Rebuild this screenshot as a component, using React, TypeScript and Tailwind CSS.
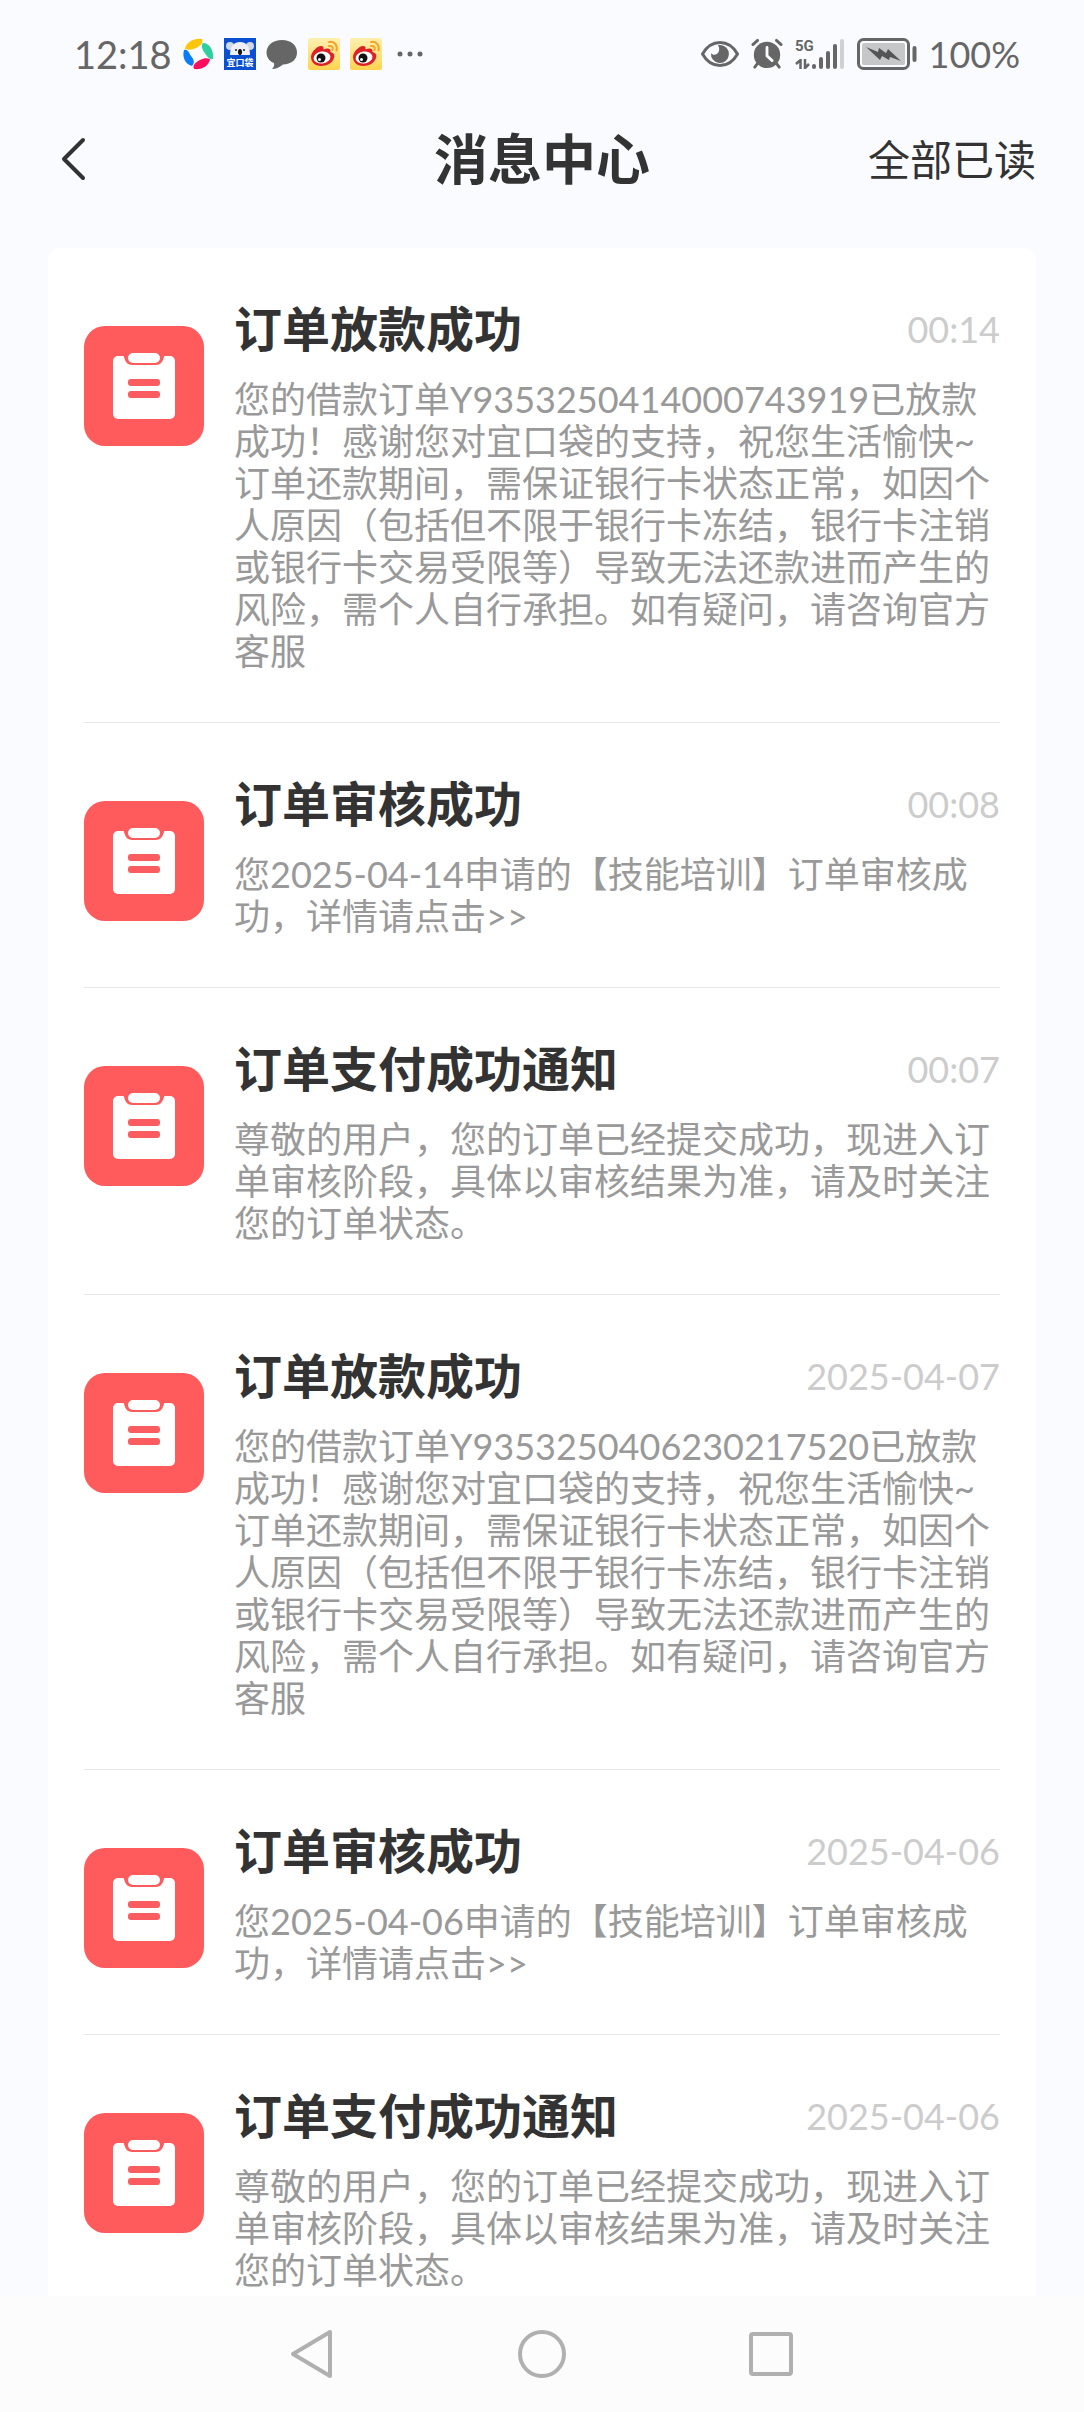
import React from 'react';

interface Message {
  id: number;
  title: string;
  time: string;
  body: string;
}

const loanBody = (orderNo: string) =>
  `您的借款订单${orderNo}已放款成功！感谢您对宜口袋的支持，祝您生活愉快~\n订单还款期间，需保证银行卡状态正常，如因个人原因（包括但不限于银行卡冻结，银行卡注销或银行卡交易受限等）导致无法还款进而产生的风险，需个人自行承担。如有疑问，请咨询官方客服`;

const reviewBody = (date: string) => `您${date}申请的【技能培训】订单审核成功，详情请点击>>`;

const paidBody =
  '尊敬的用户，您的订单已经提交成功，现进入订单审核阶段，具体以审核结果为准，请及时关注您的订单状态。';

const messages: Message[] = [
  { id: 1, title: '订单放款成功', time: '00:14', body: loanBody('Y9353250414000743919') },
  { id: 2, title: '订单审核成功', time: '00:08', body: reviewBody('2025-04-14') },
  { id: 3, title: '订单支付成功通知', time: '00:07', body: paidBody },
  { id: 4, title: '订单放款成功', time: '2025-04-07', body: loanBody('Y9353250406230217520') },
  { id: 5, title: '订单审核成功', time: '2025-04-06', body: reviewBody('2025-04-06') },
  { id: 6, title: '订单支付成功通知', time: '2025-04-06', body: paidBody },
];

const SwirlIcon = () => (
  <svg width="32" height="32" viewBox="0 0 32 32">
    <path d="M3 11C4 4 12 0 20 1C22 5 18 8 14 10C10 12 7 12 3 11Z" fill="#fcc70b" />
    <path d="M21 5C28 5 32 13 31 21C27 22 25 18 22 14C20 11 19 7 21 5Z" fill="#2fd0a0" />
    <path d="M28 21C27 28 20 32 12 31C10 27 14 24 18 22C22 20 25 20 28 21Z" fill="#f90f5c" />
    <path d="M2 12C6 11 7 15 9 18C12 21 13 25 10 28C3 26 0 19 2 12Z" fill="#0b7cf8" />
  </svg>
);

const KoalaIcon = () => (
  <svg width="32" height="32" viewBox="0 0 32 32">
    <rect width="32" height="32" fill="#0a50d0" />
    <circle cx="6" cy="8" r="4" fill="#cfd6e4" />
    <circle cx="26" cy="8" r="4" fill="#cfd6e4" />
    <path d="M6 17C6 8 10 4 16 4S26 8 26 17Z" fill="#eef0f5" />
    <circle cx="12" cy="12" r="1" fill="#222" />
    <circle cx="20" cy="12" r="1" fill="#222" />
    <ellipse cx="16" cy="14" rx="2" ry="3" fill="#111" />
    <rect y="17" width="32" height="15" fill="#0a50d0" />
    <text x="16" y="28" textAnchor="middle" fontSize="9" fontWeight="700" fill="#fff">
      宜口袋
    </text>
  </svg>
);

const BubbleIcon = () => (
  <svg width="32" height="32" viewBox="0 0 32 32">
    <path
      d="M16 2C25 2 31 7 31 14.500C31 22 25 26 17 26.500C14 29 10 31 6 31C8 29 8.500 27 8 25C3 23 0.500 19 0.500 14.500C0.500 7 7 2 16 2Z"
      fill="#666"
    />
  </svg>
);

const WeiboIcon = () => (
  <svg width="32" height="32" viewBox="0 0 32 32">
    <defs>
      <linearGradient id="weibo" x1="0" y1="0" x2="0" y2="1">
        <stop offset="0" stopColor="#fff0b0" />
        <stop offset="1" stopColor="#ffd350" />
      </linearGradient>
    </defs>
    <rect width="32" height="32" rx="2" fill="url(#weibo)" />
    <path
      d="M3 19C3 14 9 8 13 8C15 8 16 9 15.500 11.500C19 10 23 10 22.500 14C26 15 27 17 26 20C24.500 25 19 28 13 28C7 28 3 24 3 19Z"
      fill="#dd1f26"
    />
    <ellipse cx="14" cy="19.500" rx="8.500" ry="6" fill="#fff" transform="rotate(-8 14 19.500)" />
    <circle cx="13" cy="20" r="4.500" fill="#111" />
    <circle cx="11.500" cy="21.500" r="1.500" fill="#fff" />
    <path
      d="M21 4C26 3 30 7 28.500 12.500M21 8C24 7.500 25.500 9.500 24.500 12"
      fill="none"
      stroke="#f2a32a"
      strokeWidth="2"
      strokeLinecap="round"
    />
  </svg>
);

const MoreIcon = () => (
  <svg width="32" height="32" viewBox="0 0 32 32" fill="#666">
    <circle cx="8" cy="16" r="2.500" />
    <circle cx="18" cy="16" r="2.500" />
    <circle cx="28" cy="16" r="2.500" />
  </svg>
);

const EyeIcon = () => (
  <svg width="38" height="32" viewBox="0 0 38 32">
    <path
      d="M1.500 16C6 8 12 4.500 19 4.500S32 8 36.500 16C32 24 26 27.500 19 27.500S6 24 1.500 16Z"
      fill="none"
      stroke="#666"
      strokeWidth="3"
    />
    <path d="M19 7A9 9 0 1 1 10 15C12 18 17 17 18 13C18.500 11 18 9 17 7Z" fill="#666" />
  </svg>
);

const AlarmIcon = () => (
  <svg width="32" height="32" viewBox="0 0 34 32">
    <circle cx="17" cy="17" r="14" fill="#666" />
    <path
      d="M2 6L7 1.500M32 6L27 1.500M7 26L4 30M27 26L30 30"
      stroke="#666"
      strokeWidth="3"
      strokeLinecap="round"
    />
    <path d="M17 9V18L22.500 23" fill="none" stroke="#fafbff" strokeWidth="3" strokeLinecap="round" />
  </svg>
);

const SignalIcon = () => (
  <svg width="50" height="32" viewBox="0 0 50 32" fill="#666">
    <text x="0" y="13" fontSize="15" fontWeight="700" fontFamily="Roboto, sans-serif">
      5G
    </text>
    <path d="M5.500 21V31M5.500 22L1 26M10 21V31M10 30L14 26" stroke="#666" strokeWidth="2.500" />
    <rect x="17" y="26" width="4" height="5" rx="2" />
    <rect x="24" y="19" width="4" height="12" rx="2" />
    <rect x="31" y="13" width="4" height="18" rx="2" />
    <rect x="38" y="6" width="4" height="25" rx="2" />
    <rect x="45" y="1" width="4" height="30" rx="2" fill="#cfd0d3" />
  </svg>
);

const BatteryIcon = () => (
  <svg width="60" height="32" viewBox="0 0 60 32">
    <rect x="1.500" y="1.500" width="50" height="29" rx="5" fill="none" stroke="#666" strokeWidth="3" />
    <rect x="5" y="5" width="43" height="22" rx="2" fill="#c6c7c9" />
    <path d="M9 9L21 14L22 10L29 15L31 11L44 23L33 19L32 22L25 18L23 22Z" fill="#555" />
    <rect x="55.500" y="8" width="4" height="16" rx="2" fill="#666" />
  </svg>
);

const ClipboardIcon = () => (
  <svg width="120" height="120" viewBox="0 0 120 120" className="shrink-0">
    <rect width="120" height="120" rx="21" fill="#ff5a5c" />
    <rect x="29" y="30" width="62" height="63" rx="5" fill="#fff" />
    <path d="M38 27H82C79 30 80 39 72 39H48C40 39 41 30 38 27Z" fill="#ff5a5c" />
    <rect x="44" y="27" width="32" height="10" rx="5" fill="#fff" />
    <rect x="44" y="53" width="32" height="7" rx="3" fill="#fa5c60" />
    <rect x="44" y="65" width="32" height="7" rx="3" fill="#fa5c60" />
  </svg>
);

const StatusBar = () => (
  <div className="flex h-27 shrink-0 items-center justify-between pr-16 pl-[74px] text-[38px] text-[#666]">
    <div className="flex items-center gap-2.5">
      <span>12:18</span>
      <SwirlIcon />
      <KoalaIcon />
      <BubbleIcon />
      <WeiboIcon />
      <WeiboIcon />
      <MoreIcon />
    </div>
    <div className="flex items-center gap-3">
      <EyeIcon />
      <AlarmIcon />
      <SignalIcon />
      <BatteryIcon />
      <span className="text-4xl">100%</span>
    </div>
  </div>
);

const MessageItem: React.FC<{ message: Message }> = ({ message }) => (
  <li className="flex gap-[30px] border-b border-[#e8e8e8] pt-[53px] pb-[50px] last:border-b-0">
    <div className="pt-[25px]">
      <ClipboardIcon />
    </div>
    <div className="min-w-0 flex-1">
      <div className="flex items-center justify-between">
        <h2 className="text-5xl leading-[56px] font-bold text-[#333]">{message.title}</h2>
        <time className="text-4xl text-[#ccc]">{message.time}</time>
      </div>
      <p className="mt-[21px] pr-2 text-4xl leading-[42px] whitespace-pre-line text-[#999]">{message.body}</p>
    </div>
  </li>
);

const App: React.FC = () => {
  return (
    <div
      lang="zh-CN"
      className="flex h-screen flex-col bg-[#fafbff] font-['Lato','Noto_Sans_CJK_SC',sans-serif] text-[#333]"
    >
      <StatusBar />

      {/* Header */}
      <header className="grid h-26 shrink-0 grid-cols-[1fr_auto_1fr] items-center px-12">
        <button aria-label="返回" className="justify-self-start">
          <svg width="48" height="48" viewBox="0 0 48 48" fill="none" stroke="#333" strokeWidth="4">
            <path d="M35 4L16 23L35 42" strokeLinecap="round" strokeLinejoin="round" />
          </svg>
        </button>
        <h1 className="text-[54px] leading-none font-bold">消息中心</h1>
        <button className="justify-self-end text-[42px] leading-none">全部已读</button>
      </header>

      {/* Message list */}
      <main className="min-h-0 flex-1 overflow-y-auto px-12 pt-9 [scrollbar-width:none]">
        <ul className="rounded-xl bg-white px-9">
          {messages.map((m) => (
            <MessageItem key={m.id} message={m} />
          ))}
        </ul>
      </main>

      {/* System navigation */}
      <nav className="flex h-29 shrink-0 items-center justify-center gap-[182px] bg-[#fcfcfc]">
        <button aria-label="后退">
          <svg width="48" height="52" viewBox="0 0 48 52" fill="none" stroke="#b0b0b0" strokeWidth="4">
            <path d="M42 4V48L5 26Z" strokeLinejoin="round" />
          </svg>
        </button>
        <button aria-label="主页">
          <svg width="48" height="52" viewBox="0 0 48 52" fill="none" stroke="#b0b0b0" strokeWidth="4">
            <circle cx="24" cy="26" r="22" />
          </svg>
        </button>
        <button aria-label="最近任务">
          <svg width="48" height="52" viewBox="0 0 48 52" fill="none" stroke="#b0b0b0" strokeWidth="4">
            <rect x="3" y="6" width="40" height="40" rx="2" />
          </svg>
        </button>
      </nav>
    </div>
  );
};

export default App;
